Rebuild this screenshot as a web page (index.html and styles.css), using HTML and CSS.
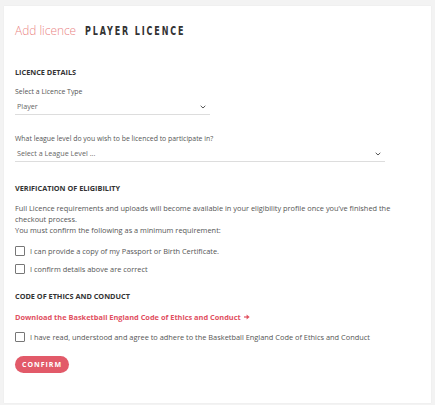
FILE: index.html
```html
<!DOCTYPE html>
<html lang="en">
<head>
<meta charset="utf-8">
<title>Add licence</title>
<link rel="stylesheet" href="styles.css">
</head>
<body>
<main class="card">
  <h1 class="title"><span class="title-add">Add licence</span><span class="title-type">PLAYER LICENCE</span></h1>

  <h2 class="section-heading first">LICENCE DETAILS</h2>
  <label class="field-label">Select a Licence Type</label>
  <div class="select select-short">
    <span class="select-value">Player</span>
    <svg class="chevron" width="6" height="4" viewBox="0 0 6 4"><path d="M0.7 0.8 L3 3 L5.3 0.8" fill="none" stroke="#555" stroke-width="1"/></svg>
  </div>

  <label class="field-label second">What league level do you wish to be licenced to participate in?</label>
  <div class="select select-long">
    <span class="select-value">Select a League Level ...</span>
    <svg class="chevron" width="6" height="4" viewBox="0 0 6 4"><path d="M0.7 0.8 L3 3 L5.3 0.8" fill="none" stroke="#555" stroke-width="1"/></svg>
  </div>

  <h2 class="section-heading verify">VERIFICATION OF ELIGIBILITY</h2>
  <p class="info">Full Licence requirements and uploads will become available in your eligibility profile once you’ve finished the checkout process.<br>You must confirm the following as a minimum requirement:</p>
  <div class="check-list">
    <label class="check"><span class="box"></span><span>I can provide a copy of my Passport or Birth Certificate.</span></label>
    <label class="check"><span class="box"></span><span>I confirm details above are correct</span></label>
  </div>

  <h2 class="section-heading code">CODE OF ETHICS AND CONDUCT</h2>
  <a class="download" href="#">Download the Basketball England Code of Ethics and Conduct <svg class="arrow" width="6" height="6" viewBox="0 0 6 6"><path d="M0 3 H4" stroke="#e1505f" stroke-width="1.2"/><path d="M2.6 0.6 L5.6 3 L2.6 5.4 Z" fill="#e1505f"/></svg></a>
  <label class="check ethics"><span class="box"></span><span>I have read, understood and agree to adhere to the Basketball England Code of Ethics and Conduct</span></label>

  <button class="confirm" type="button">CONFIRM</button>
</main>
</body>
</html>
```
FILE: styles.css
```css
html, body {
  margin: 0;
  padding: 0;
}
body {
  background: #f3f3f3;
  font-family: "Open Sans", "Liberation Sans", sans-serif;
  color: #555;
  font-size: 7.4px;
  line-height: 11px;
  padding: 6px 4px 3px 4px;
}
.card {
  background: #fff;
  padding: 16px 21px 30px 11px;
  box-shadow: 0 0 1px rgba(0,0,0,0.08);
  display: flex;
  flex-direction: column;
  align-items: flex-start;
}
.title {
  margin: 0;
  display: flex;
  align-items: baseline;
  gap: 9px;
  line-height: 16px;
  font-weight: normal;
}
.title-add {
  font-family: "Open Sans", sans-serif;
  font-weight: 300;
  font-size: 11.9px;
  color: #ea8585;
}
.title-type {
  display: inline-block;
  font-family: "DejaVu Sans Condensed", "DejaVu Sans", sans-serif;
  font-weight: bold;
  font-size: 12.4px;
  letter-spacing: 2.6px;
  color: #333;
  transform: scaleX(0.72);
  transform-origin: left center;
}
.section-heading {
  margin: 0;
  font-size: 7.3px;
  line-height: 11px;
  font-weight: 700;
  color: #333;
}
.section-heading.first { margin-top: 27.5px; }
.section-heading.verify { margin-top: 20.5px; }
.section-heading.code { margin-top: 15.5px; }
.field-label {
  display: block;
  margin-top: 8.7px;
  font-size: 6.9px;
  color: #555;
}
.field-label.second { margin-top: 17.5px; }
.select {
  margin-top: 2px;
  height: 15px;
  border-bottom: 1.5px solid #ddd;
  display: flex;
  align-items: center;
  justify-content: space-between;
  padding: 0 4px 0 2px;
  box-sizing: content-box;
}
.select-short { width: 189px; }
.select-long { width: 364px; margin-top: 2.5px; }
.select-value { color: #666; font-size: 7.2px; }
.chevron { display: block; }
.info {
  margin: 9px 0 0 0;
  color: #555;
}
.check-list {
  margin-top: 9.5px;
  display: flex;
  flex-direction: column;
  gap: 6px;
}
.check {
  display: flex;
  align-items: center;
  gap: 5px;
  height: 12px;
  color: #555;
}
.box {
  width: 8px;
  height: 8px;
  border: 1px solid #777;
  border-radius: 1px;
  flex: none;
}
.download {
  margin-top: 10px;
  color: #e1505f;
  font-weight: 700;
  text-decoration: none;
}
.arrow {
  display: inline-block;
  vertical-align: -0.5px;
  margin-left: 1px;
}
.check.ethics { margin-top: 8.5px; }
.confirm {
  margin-top: 13px;
  height: 17px;
  width: 54px;
  padding: 0;
  border: none;
  border-radius: 9px;
  background: #e25a69;
  color: #fff;
  font-family: "Open Sans", sans-serif;
  font-size: 7px;
  font-weight: 700;
  letter-spacing: 1px;
  line-height: 17px;
}
```
